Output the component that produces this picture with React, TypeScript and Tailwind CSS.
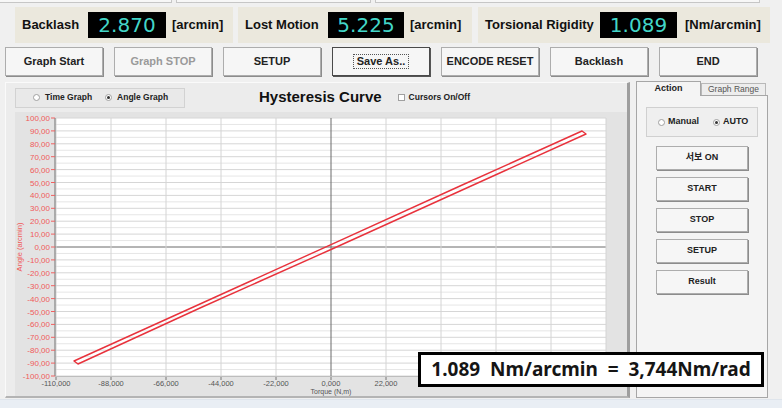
import React from 'react';

const X = (t: number) => 331 + t * 2.5;
const Y = (a: number) => 247 - a * 1.29;

const yTicks = Array.from({ length: 21 }, (_, i) => 100 - i * 10);
const yMinor = Array.from({ length: 20 }, (_, i) => 95 - i * 10);
const xTicks = [-110, -88, -66, -44, -22, 0, 22, 44, 66, 88, 110];

const fmtY = (v: number) => v.toFixed(2).replace('.', ',');
const fmtX = (v: number) => v.toFixed(3).replace('.', ',');

const Radio: React.FC<{ on?: boolean }> = ({ on }) => (
  <span className="w-[7px] h-[7px] rounded-full border border-[#a0a0a0] bg-white flex items-center justify-center">
    {on && <span className="w-[3px] h-[3px] rounded-full bg-[#333]" />}
  </span>
);

const ToolButton: React.FC<{ label: string; disabled?: boolean; focused?: boolean }> = ({ label, disabled, focused }) => (
  <button
    className={
      focused
        ? 'w-[98px] h-[29px] border border-[#4a4a4a] bg-[#f6f6f6] shadow-[1px_1px_0_#555] flex items-center justify-center text-[11px] font-bold text-[#222]'
        : 'w-[98px] h-[29px] border border-[#adadad] bg-[#f6f6f6] shadow-[1px_1px_0_#8c8c8c] flex items-center justify-center text-[11px] font-bold ' +
          (disabled ? 'text-[#9a9a9a]' : 'text-[#222]')
    }
  >
    {focused ? <span className="border border-dotted border-[#555] px-[3px] leading-[13px]">{label}</span> : label}
  </button>
);

const SideButton: React.FC<{ label: string }> = ({ label }) => (
  <button className="w-[92px] h-[24px] border border-[#adadad] bg-[#f6f6f6] shadow-[1px_1px_0_#8c8c8c] flex items-center justify-center text-[9px] font-bold text-[#222] font-['Liberation_Sans','Noto_Sans_CJK_KR',sans-serif]">
    {label}
  </button>
);

const Chart: React.FC = () => (
  <svg width={621} height={284} viewBox="6 112 621 284" className="block">
    <rect x={6} y={112} width={621} height={284} fill="#ececec" />
    <rect x={15} y={112} width={612} height={284} fill="#e3e3e3" />
    <rect x={55} y={118} width={551} height={258} fill="#ffffff" />
    {yMinor.map((v) => (
      <line key={'m' + v} x1={55} x2={606} y1={Y(v)} y2={Y(v)} stroke="#e6e6e6" strokeWidth={1} />
    ))}
    {yTicks.map((v) => (
      <line key={'g' + v} x1={55} x2={606} y1={Y(v)} y2={Y(v)} stroke={v === 0 ? '#6a6a6a' : '#d6d6d6'} strokeWidth={1} />
    ))}
    {xTicks.map((v) => (
      <line key={'v' + v} x1={X(v)} x2={X(v)} y1={118} y2={376} stroke={v === 0 ? '#6a6a6a' : '#d4d4d4'} strokeWidth={1} />
    ))}
    <line x1={55} x2={55} y1={118} y2={376} stroke="#707070" strokeWidth={1} />
    <line x1={55} x2={606} y1={376.5} y2={376.5} stroke="#bdbdbd" strokeWidth={1} />
    {yTicks.map((v) => (
      <g key={'yl' + v}>
        <line x1={51} x2={55} y1={Y(v)} y2={Y(v)} stroke="#f06060" strokeWidth={1} />
        <text x={50} y={Y(v) + 3} textAnchor="end" fontSize={8} fill="#f05a5a" fontFamily="Liberation Sans, sans-serif">
          {fmtY(v)}
        </text>
      </g>
    ))}
    {xTicks.map((v) => (
      <g key={'xl' + v}>
        <line x1={X(v)} x2={X(v)} y1={377} y2={380} stroke="#777" strokeWidth={1} />
        <text x={X(v)} y={386} textAnchor="middle" fontSize={7.5} fill="#555" fontFamily="Liberation Sans, sans-serif">
          {fmtX(v)}
        </text>
      </g>
    ))}
    <text x={331} y={394} textAnchor="middle" fontSize={7} fill="#555" fontFamily="Liberation Sans, sans-serif">
      Torque (N,m)
    </text>
    <text
      x={22}
      y={247}
      transform="rotate(-90 22 247)"
      textAnchor="middle"
      fontSize={7.5}
      fill="#f05a5a"
      fontFamily="Liberation Sans, sans-serif"
    >
      Angle (arcmin)
    </text>
    <path
      d="M 74 361 L 200 304 L 331 244.6 L 460 186 L 582 131 L 586 134 L 460 191 L 331 249.5 L 200 308 L 78 364 Z"
      fill="none"
      stroke="#e8323c"
      strokeWidth={1.4}
      strokeLinejoin="round"
    />
  </svg>
);

export default function App() {
  return (
    <div className="relative w-[782px] h-[408px] overflow-hidden bg-[#f0f0f0] flex flex-col font-['Liberation_Sans',Arial,sans-serif] text-[#111]">
      {/* remnants of the panels above */}
      <div className="h-[3px] flex gap-[4px] shrink-0">
        <div className="w-[172px] border-b border-r border-[#c6c6c6] bg-[#f7f7f7]" />
        <div className="w-[195px] border-b border-x border-[#c6c6c6] bg-[#f7f7f7]" />
        <div className="w-[385px] border-b border-x border-[#c6c6c6] bg-[#f7f7f7]" />
      </div>

      {/* readouts */}
      <div className="flex h-[36px] mt-[4px] pl-[15px] shrink-0">
        <div className="w-[218px] bg-[#ebe8dd] flex items-center pl-[7px]">
          <span className="w-[66px] text-[13px] font-bold whitespace-nowrap">Backlash</span>
          <span className="w-[78px] h-[26px] bg-black flex items-center justify-center text-[20px] text-[#43d6c8] font-['DejaVu_Sans',sans-serif]">
            2.870
          </span>
          <span className="ml-[6px] text-[13px] font-bold whitespace-nowrap">[arcmin]</span>
        </div>
        <div className="w-[234px] ml-[5px] bg-[#ebe8dd] flex items-center pl-[7px]">
          <span className="w-[83px] text-[13px] font-bold whitespace-nowrap">Lost Motion</span>
          <span className="w-[76px] h-[26px] bg-black flex items-center justify-center text-[20px] text-[#43d6c8] font-['DejaVu_Sans',sans-serif]">
            5.225
          </span>
          <span className="ml-[6px] text-[13px] font-bold whitespace-nowrap">[arcmin]</span>
        </div>
        <div className="w-[292px] ml-[6px] bg-[#ebe8dd] flex items-center pl-[7px]">
          <span className="w-[115px] text-[13px] font-bold whitespace-nowrap">Torsional Rigidity</span>
          <span className="w-[77px] h-[26px] bg-black flex items-center justify-center text-[20px] text-[#43d6c8] font-['DejaVu_Sans',sans-serif]">
            1.089
          </span>
          <span className="ml-[8px] text-[13px] font-bold whitespace-nowrap">[Nm/arcmin]</span>
        </div>
      </div>

      {/* command buttons */}
      <div className="flex h-[29px] mt-[4px] pl-[5px] gap-[11px] shrink-0">
        <ToolButton label="Graph Start" />
        <ToolButton label="Graph STOP" disabled />
        <ToolButton label="SETUP" />
        <ToolButton label="Save As.." focused />
        <ToolButton label="ENCODE RESET" />
        <ToolButton label="Backlash" />
        <ToolButton label="END" />
      </div>

      {/* main area */}
      <div className="flex pl-[5px] mt-[4px] h-[319px] shrink-0">
        <div className="w-[625px] h-[316px] mt-[2px] bg-[#ececec] border-l border-t border-[#fafafa] border-r-[3px] border-r-[#9e9e9e] border-b-2 border-b-[#b4b4b4] flex flex-col">
          <div className="h-[29px] flex items-center shrink-0">
            <div className="ml-[9px] w-[170px] h-[20px] border border-[#d2d2d2] bg-[#e9e9e9] flex items-center pl-[17px] text-[8.5px] font-bold text-[#222]">
              <Radio />
              <span className="ml-[5px]">Time Graph</span>
              <span className="ml-[13px]"><Radio on /></span>
              <span className="ml-[5px]">Angle Graph</span>
            </div>
            <span className="ml-[74px] text-[15px] font-bold text-[#111] whitespace-nowrap">Hysteresis Curve</span>
            <span className="ml-[16px] w-[7px] h-[7px] border border-[#a0a0a0] bg-white" />
            <span className="ml-[4px] text-[8.5px] font-bold text-[#222]">Cursors On/Off</span>
          </div>
          <Chart />
        </div>

        <div className="ml-[6px] w-[132px] h-[318px] flex flex-col">
          <div className="h-[15px] flex items-end shrink-0">
            <div className="w-[65px] h-[15px] border border-b-0 border-[#a6a6a6] bg-[#f4f4f4] flex items-center justify-center text-[9px] font-bold text-[#222] relative z-10 -mb-px">
              Action
            </div>
            <div className="w-[65px] h-[12px] border border-b-0 border-[#b8b8b8] bg-[#ededed] flex items-center justify-center text-[8.5px] text-[#555]">
              Graph Range
            </div>
          </div>
          <div className="flex-1 border border-[#a6a6a6] bg-[#f4f4f4] flex flex-col">
            <div className="mt-[11px] ml-[9px] w-[112px] h-[30px] border border-[#d0d0d0] bg-[#efefef] flex items-center pl-[11px] text-[9px] font-bold text-[#222]">
              <Radio />
              <span className="ml-[3px]">Manual</span>
              <span className="ml-[14px]"><Radio on /></span>
              <span className="ml-[3px]">AUTO</span>
            </div>
            <div className="mt-[9px] ml-[19px] flex flex-col gap-[7px]">
              <SideButton label="서보 ON" />
              <SideButton label="START" />
              <SideButton label="STOP" />
              <SideButton label="SETUP" />
              <SideButton label="Result" />
            </div>
          </div>
        </div>
      </div>

      <div className="flex-1 bg-[#e9eef4] border-t border-[#dfe5ec]" />

      {/* stiffness conversion note laid over the chart */}
      <div className="absolute left-[418px] top-[352px] w-[346px] h-[35px] border-[3px] border-black bg-white flex items-center justify-center">
        <span className="whitespace-pre text-[19px] font-bold text-[#151515] font-['Noto_Sans',sans-serif]">
          1.089  Nm/arcmin  =  3,744Nm/rad
        </span>
      </div>
    </div>
  );
}
